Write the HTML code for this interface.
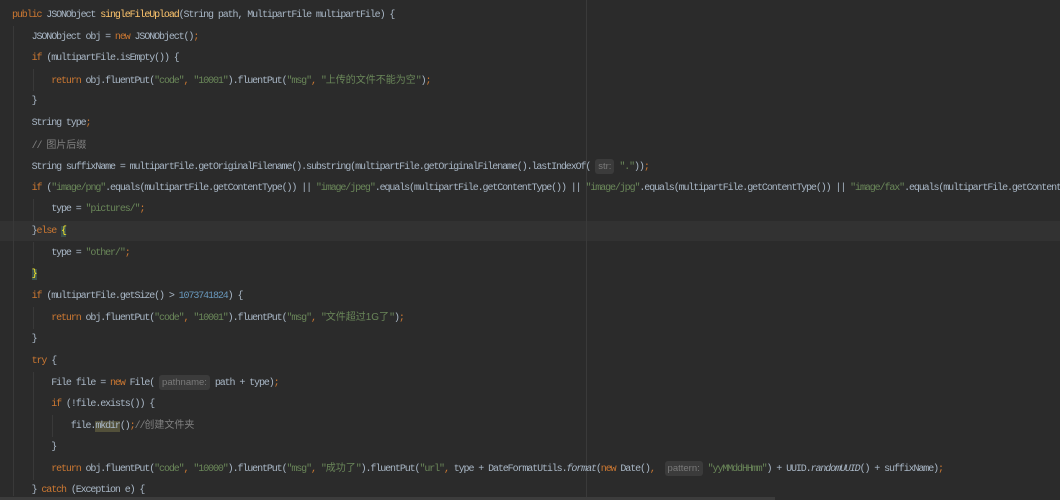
<!DOCTYPE html>
<html><head><meta charset="utf-8"><style>
html,body{margin:0;padding:0;background:#2b2b2b;width:1060px;height:500px;overflow:hidden;position:relative}
.code{position:absolute;left:12px;top:5px;font-family:"Liberation Mono","Noto Sans CJK SC",monospace;font-size:10px;letter-spacing:-1.1px;color:#a9b7c6}
.l{height:21.6px;line-height:21.6px;white-space:pre}
.k{color:#cc7832}.s{color:#6a8759}.n{color:#6897bb}.f{color:#ffc66d}.c{color:#808080}.i{font-style:italic}
.z{font-family:"Liberation Sans","Noto Sans CJK SC",sans-serif;letter-spacing:0;font-size:10px}
.h{background:#3b3b3b;color:#7a7a7a;font-family:"Liberation Sans",sans-serif;letter-spacing:0;font-size:9.5px;border-radius:3px;padding:2px 3px}
.b{background:#3b514d;color:#ffef28}
.m{background:#52503a}
.cur{position:absolute;left:0;top:221px;width:1060px;height:20px;background:#323232}
.g{position:absolute;width:1px;background:#393939}
</style></head><body>
<div class="cur"></div>
<div class="g" style="left:586px;top:0;height:500px;background:#3a3a3a"></div>
<div class="g" style="left:13px;top:26px;height:470px"></div>
<div class="g" style="left:33px;top:69px;height:22px"></div>
<div class="g" style="left:33px;top:199px;height:22px"></div>
<div class="g" style="left:33px;top:242px;height:22px"></div>
<div class="g" style="left:33px;top:307px;height:22px"></div>
<div class="g" style="left:33px;top:372px;height:108px"></div>
<div class="g" style="left:52px;top:415px;height:22px"></div>
<div style="position:absolute;left:0;top:497px;width:775px;height:3px;background:#3c3c3c"></div>
<div class="code"><div class="l"><span class="k">public</span> JSONObject <span class="f">singleFileUpload</span>(String path, MultipartFile multipartFile) {</div><div class="l">    JSONObject obj = <span class="k">new</span> JSONObject()<span class="k">;</span></div><div class="l">    <span class="k">if</span> (multipartFile.isEmpty()) {</div><div class="l">        <span class="k">return</span> obj.fluentPut(<span class="s">"code"</span><span class="k">,</span> <span class="s">"10001"</span>).fluentPut(<span class="s">"msg"</span><span class="k">,</span> <span class="s">"<span class="z">上传的文件不能为空</span>"</span>)<span class="k">;</span></div><div class="l">    }</div><div class="l">    String type<span class="k">;</span></div><div class="l">    <span class="c">// <span class="z">图片后缀</span></span></div><div class="l">    String suffixName = multipartFile.getOriginalFilename().substring(multipartFile.getOriginalFilename().lastIndexOf( <span class="h">str:</span> <span class="s">"."</span>))<span class="k">;</span></div><div class="l">    <span class="k">if</span> (<span class="s">"image/png"</span>.equals(multipartFile.getContentType()) || <span class="s">"image/jpeg"</span>.equals(multipartFile.getContentType()) || <span class="s">"image/jpg"</span>.equals(multipartFile.getContentType()) || <span class="s">"image/fax"</span>.equals(multipartFile.getContentType()) ||</div><div class="l">        type = <span class="s">"pictures/"</span><span class="k">;</span></div><div class="l">    }<span class="k">else</span> <span class="b">{</span></div><div class="l">        type = <span class="s">"other/"</span><span class="k">;</span></div><div class="l">    <span class="b">}</span></div><div class="l">    <span class="k">if</span> (multipartFile.getSize() &gt; <span class="n">1073741824</span>) {</div><div class="l">        <span class="k">return</span> obj.fluentPut(<span class="s">"code"</span><span class="k">,</span> <span class="s">"10001"</span>).fluentPut(<span class="s">"msg"</span><span class="k">,</span> <span class="s">"<span class="z">文件超过1G了</span>"</span>)<span class="k">;</span></div><div class="l">    }</div><div class="l">    <span class="k">try</span> {</div><div class="l">        File file = <span class="k">new</span> File( <span class="h">pathname:</span> path + type)<span class="k">;</span></div><div class="l">        <span class="k">if</span> (!file.exists()) {</div><div class="l">            file.<span class="m">mkdir</span>()<span class="k">;</span><span class="c">//<span class="z">创建文件夹</span></span></div><div class="l">        }</div><div class="l">        <span class="k">return</span> obj.fluentPut(<span class="s">"code"</span><span class="k">,</span> <span class="s">"10000"</span>).fluentPut(<span class="s">"msg"</span><span class="k">,</span> <span class="s">"<span class="z">成功了</span>"</span>).fluentPut(<span class="s">"url"</span><span class="k">,</span> type + DateFormatUtils.<span class="i">format</span>(<span class="k">new</span> Date()<span class="k">,</span>  <span class="h">pattern:</span> <span class="s">"yyMMddHHmm"</span>) + UUID.<span class="i">randomUUID</span>() + suffixName)<span class="k">;</span></div><div class="l">    } <span class="k">catch</span> (Exception e) {</div></div>
</body></html>
